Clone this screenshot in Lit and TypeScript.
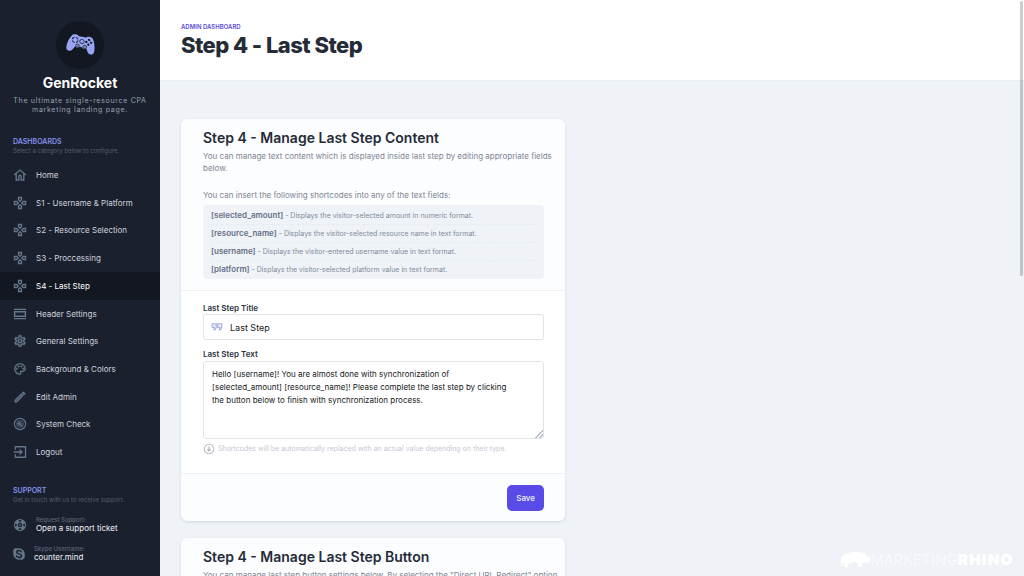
import { LitElement, html, css, svg, nothing } from "lit";
import { customElement, property } from "lit/decorators.js";

const icons: Record<string, unknown> = {
  home: svg`<path fill="none" stroke="currentColor" stroke-width="2.300" d="M2 12 12 3.600 22 12M5.500 10v10.500H10v-6a2 2 0 0 1 4 0v6h4.500V10"/>`,
  pad: svg`<g fill="none" stroke="currentColor" stroke-width="2.300">
    <path d="M9.500 2.500h5v4L12 9 9.500 6.500z"/><path d="M9.500 21.500h5v-4L12 15l-2.500 2.500z"/>
    <path d="M2.500 9.500v5h4L9 12 6.500 9.500z"/><path d="M21.500 9.500v5h-4L15 12l2.500-2.500z"/></g>`,
  header: svg`<path fill="currentColor" d="M1.500 3h21v2.200h-21zM1.500 18.800h21V21h-21zM1.500 7h21v10h-21zM4 9.300v5.400h16V9.300z" fill-rule="evenodd"/>`,
  gear: svg`<path fill="currentColor" stroke="currentColor" stroke-width=".6" d="M12 8a4 4 0 1 1 0 8 4 4 0 0 1 0-8m0 2a2 2 0 1 0 0 4 2 2 0 0 0 0-4m-2 12c-.25 0-.46-.18-.5-.42l-.37-2.65c-.63-.25-1.17-.59-1.690-.99l-2.490 1.010c-.22.08-.49 0-.61-.22l-2-3.460a.493.493 0 0 1 .12-.64l2.110-1.660L4.500 12l.07-1-2.110-1.630a.493.493 0 0 1-.12-.64l2-3.460c.12-.22.39-.31.61-.22l2.490 1c.52-.39 1.060-.73 1.690-.98l.37-2.650c.04-.24.25-.42.5-.42h4c.25 0 .46.18.5.42l.37 2.650c.63.25 1.170.59 1.690.98l2.490-1c.22-.09.49 0 .61.22l2 3.460c.13.22.07.49-.12.64L19.430 11l.07 1-.07 1 2.110 1.630c.19.15.25.42.12.64l-2 3.460c-.12.22-.39.31-.61.22l-2.490-1c-.52.39-1.060.73-1.690.98l-.37 2.650c-.04.24-.25.42-.5.42zm1.250-18-.37 2.610c-1.200.25-2.260.89-3.030 1.780L5.440 7.350l-.75 1.300L6.800 10.200a5.550 5.550 0 0 0 0 3.600l-2.120 1.560.75 1.300 2.430-1.040c.77.88 1.820 1.520 3.010 1.760l.37 2.620h1.520l.37-2.610c1.190-.25 2.240-.89 3.010-1.770l2.430 1.040.75-1.300-2.120-1.550c.4-1.170.4-2.440 0-3.610l2.110-1.550-.75-1.300-2.410 1.040a5.420 5.420 0 0 0-3.030-1.770L12.750 4z"/>`,
  palette: svg`<path fill="currentColor" stroke="currentColor" stroke-width=".4" d="M12 22A10 10 0 1 1 22 11c0 3.300-2.700 6-6 6h-1.800c-.3 0-.5.2-.5.5 0 .1.100.2.100.3.400.5.600 1.100.600 1.700A2.500 2.500 0 0 1 12 22m0-18a8 8 0 0 0 0 16c.3 0 .5-.2.5-.5 0-.2-.1-.3-.1-.4-.4-.5-.6-1-.6-1.600a2.500 2.500 0 0 1 2.500-2.500H16a4 4 0 0 0 4-4c0-3.900-3.600-7-8-7M6.500 10a1.500 1.500 0 1 1 0 3 1.500 1.500 0 0 1 0-3m3-4a1.500 1.500 0 1 1 0 3 1.500 1.500 0 0 1 0-3m5 0a1.500 1.500 0 1 1 0 3 1.500 1.500 0 0 1 0-3m3 4a1.500 1.500 0 1 1 0 3 1.500 1.500 0 0 1 0-3"/>`,
  pencil: svg`<path fill="currentColor" stroke="currentColor" stroke-width=".8" fill-rule="evenodd" d="M3 17.250V21h3.750L17.810 9.940l-3.750-3.750zM20.710 7.040a1 1 0 0 0 0-1.410l-2.340-2.340a1 1 0 0 0-1.410 0l-1.830 1.830 3.750 3.750zM5 18.100 14.060 9l.9.9L5.900 19H5z"/>`,
  check: svg`<circle cx="12" cy="12" r="9.700" fill="none" stroke="currentColor" stroke-width="2"/><circle cx="12" cy="12" r="7" fill="currentColor" opacity=".4"/><path d="M16.500 15.600 12.700 11.800a3 3 0 0 0-3.900-3.700l1.800 1.800-1.300 1.300-1.800-1.800a3 3 0 0 0 3.700 3.900l3.800 3.800z" fill="currentColor"/>`,
  logout: svg`<path fill="none" stroke="currentColor" stroke-width="2.200" d="M4 8V3h17.500v18H4v-5M1.500 12H15M11 7.500l4.500 4.500-4.500 4.500"/>`,
  support: svg`<path fill="currentColor" fill-rule="evenodd" d="M12 1.500a10.500 10.500 0 1 1 0 21 10.500 10.500 0 0 1 0-21m0 6.700a3.800 3.800 0 1 0 0 7.600 3.800 3.800 0 0 0 0-7.600M9.400 3.700l1 2.700h3.200l1-2.700a9 9 0 0 0-5.200 0M3.700 9.400a9 9 0 0 0 0 5.200l2.700-1v-3.200zm16.600 0-2.700 1v3.200l2.700 1a9 9 0 0 0 0-5.200M9.400 20.300a9 9 0 0 0 5.200 0l-1-2.700h-3.200z"/><circle cx="12" cy="12" r="1.500" fill="currentColor"/>`,
  skype: svg`<path fill="currentColor" d="M7 1.500c1.200 0 2.300.3 3.200.9A9.800 9.800 0 0 1 21.600 13.900 6 6 0 0 1 13.800 21.600 9.800 9.800 0 0 1 2.400 10.100 6 6 0 0 1 7 1.500"/><path d="M16 8.300C15.300 6.700 13.800 6 12 6c-2.200 0-4 1-4 2.900 0 4 8.300 2 8.300 5.900 0 2-1.900 3.200-4.200 3.200-2.200 0-3.800-.9-4.500-2.900" fill="none" stroke="#1b202e" stroke-width="2.400" stroke-linecap="round"/>`,
  quote: svg`<path fill="currentColor" fill-opacity=".25" stroke="currentColor" stroke-width="2.300" d="M2.500 5.500h8V13l-2 4.500h-3l1-4.500h-4zM13.500 5.500h8V13l-2 4.500h-3l1-4.500h-4z"/>`,
  info: svg`<circle cx="12" cy="12" r="9.500" fill="none" stroke="currentColor" stroke-width="2.200"/><path fill="none" stroke="currentColor" stroke-width="2.600" d="M12 6.500v9M8.500 12.500l3.500 3.500 3.500-3.500"/>`,
};

const icon = (name: string) =>
  html`<svg class="icon" viewBox="0 0 24 24" aria-hidden="true">${icons[name]}</svg>`;

const iconStyles = css`
  .icon { width: 14px; height: 14px; display: block; flex: none; }
`;

@customElement("side-bar")
class SideBar extends LitElement {
  static styles = [iconStyles, css`
    :host { display: block; background: #1b202e; color: #fff; overflow: hidden; }
    .brand { padding: 21px 8px 0; text-align: center; }
    .logo { width: 48px; height: 48px; display: block; margin: 0 auto; }
    .name { margin: 5px 0 0; font-size: 14px; line-height: 18px; font-weight: 700; }
    .tagline { margin: 4px 0 0; font-size: 7px; line-height: 9px; letter-spacing: 0.1em; color: #9aa2b1; }
    .group { padding: 0 13px; }
    .group-main { margin-top: 23px; }
    .group-support { margin-top: 20px; }
    .group-title { margin: 0; font-size: 7px; line-height: 10px; font-weight: 600; color: #8492ea; }
    .group-note { margin: 0; font-size: 6px; line-height: 8px; color: #555e6f; }
    .menu { display: flex; flex-direction: column; height: 305px; margin: 6px 0 0; padding: 0; list-style: none; }
    .entry { flex: 1; display: flex; }
    .link { flex: 1; display: flex; align-items: center; gap: 9px; padding: 0 13px; font-size: 8px; color: #cdd3dd; text-decoration: none; }
    .link.active { background: #131722; color: #fff; }
    .link .icon, .contact .icon { color: #64768a; }
    .contact { display: flex; align-items: center; gap: 9px; margin-top: 12px; padding: 0 13px; color: #f1f3f7; text-decoration: none; }
    .contact + .contact { gap: 8px; padding: 0 12px; }
    .contact-label { display: block; font-size: 6px; line-height: 7px; font-weight: 500; color: #5b6679; }
    .contact-value { display: block; font-size: 8px; line-height: 10px; }
  `];

  items = [
    ["home", "Home"], ["pad", "S1 - Username & Platform"], ["pad", "S2 - Resource Selection"],
    ["pad", "S3 - Proccessing"], ["pad", "S4 - Last Step"], ["header", "Header Settings"],
    ["gear", "General Settings"], ["palette", "Background & Colors"], ["pencil", "Edit Admin"],
    ["check", "System Check"], ["logout", "Logout"],
  ];

  render() {
    return html`
      <div class="brand">
        <svg class="logo" viewBox="0 0 48 48" role="img" aria-label="Game controller">
          <circle cx="24" cy="24" r="24" fill="#131722" />
          <g transform="translate(1 1) rotate(10 23.500 25) scale(1 .88)">
            <path fill="#98a5f3" d="M13.500 16.300c1.400-1.300 4.300-1.500 5.600-.5l.8.900h7.600l.8-.9c1.400-1 4.200-.8 5.500.5 2.600 3.700 4.100 9.500 4 14.700-.1 2.400-1.300 4-3.300 3.900-1.900 0-2.800-1.400-3.600-3l-1.500-3.300c-1.200 1.500-3.400 1.500-4.500-.3h-2.300c-1.100 1.800-3.300 1.800-4.500.3l-1.500 3.300c-.8 1.600-1.800 3-3.700 3-2 0-3.300-1.500-3.400-3.900-.1-5.200 1.400-11 4-14.700"/>
            <circle cx="17" cy="21.500" r="3" fill="none" stroke="#131722" stroke-width="1" stroke-dasharray="3.300 1.400"/>
            <circle cx="24" cy="22" r="2.300" fill="none" stroke="#131722" stroke-width=".8"/>
            <g fill="#131722"><circle cx="30.800" cy="18.800" r="1.200"/><circle cx="28.400" cy="21.500" r="1.200"/><circle cx="33.200" cy="21.500" r="1.200"/><circle cx="30.800" cy="24.200" r="1.200"/></g>
            <g fill="#7f89ad" stroke="#131722" stroke-width=".6"><circle cx="20.300" cy="27.500" r="1.900"/><circle cx="27.600" cy="27.500" r="1.900"/></g>
          </g>
        </svg>
        <p class="name">GenRocket</p>
        <p class="tagline">The ultimate single-resource CPA marketing landing page.</p>
      </div>
      <div class="group group-main">
        <h2 class="group-title">DASHBOARDS</h2>
        <p class="group-note">Select a category below to configure.</p>
      </div>
      <ul class="menu">
        ${this.items.map(([name, label], i) => html`<li class="entry">
          <a class="link ${i === 4 ? "active" : ""}" href="#" aria-current=${i === 4 ? "page" : nothing}>${icon(name)}<span>${label}</span></a>
        </li>`)}
      </ul>
      <div class="group group-support">
        <h2 class="group-title">SUPPORT</h2>
        <p class="group-note">Get in touch with us to receive support.</p>
      </div>
      <a class="contact" href="#">${icon("support")}<span><span class="contact-label">Request Support:</span><span class="contact-value">Open a support ticket</span></span></a>
      <a class="contact" href="#">${icon("skype")}<span><span class="contact-label">Skype Username:</span><span class="contact-value">counter.mind</span></span></a>
    `;
  }
}

@customElement("settings-card")
class SettingsCard extends LitElement {
  @property() heading = "";
  static styles = css`
    :host { display: block; background: #fff; border-radius: 7px; box-shadow: 0 1px 3px rgba(40, 60, 90, 0.14); overflow: hidden; }
    .head { padding: 10px 21px 11px 22px; background: #fbfdff; border-bottom: 1px solid #edf1f6; }
    .title { margin: 0; font-size: 14px; line-height: 18px; font-weight: 600; color: #252c38; }
    .body { padding: 12px 21px 18px 22px; }
    .foot { display: flex; justify-content: flex-end; padding: 11px 21px 10px; background: #fbfdff; border-top: 1px solid #edf1f6; }
  `;
  render() {
    return html`
      <div class="head"><h2 class="title">${this.heading}</h2><slot name="intro"></slot></div>
      <div class="body"><slot></slot></div>
      <div class="foot"><slot name="actions"></slot></div>
    `;
  }
}

@customElement("app-root")
class AppRoot extends LitElement {
  static styles = [iconStyles, css`
    :host { display: grid; grid-template-columns: 160px minmax(0, 1fr); height: 100vh; overflow: hidden; position: relative; background: #eff3f8; font-family: Inter, sans-serif; }
    .main { min-width: 0; overflow: hidden; }
    .top { padding: 22px 21px 20px; background: #fff; border-bottom: 1px solid #e9eef4; }
    .eyebrow { margin: 0; font-size: 6px; line-height: 9px; font-weight: 600; color: #5a4be0; }
    .page-title { margin: 0; font-size: 22px; line-height: 29px; font-weight: 800; letter-spacing: -0.025em; color: #252c38; }
    .cards { display: flex; flex-direction: column; gap: 17px; max-width: 384px; padding: 38px 21px; }
    .note { margin: 3px -18px 0 0; font-size: 8px; line-height: 12px; color: #7d8593; }
    .note-codes { margin-top: 15px; }
    .codes { margin: 4px 0 0; padding: 2px 8px 1px; list-style: none; border-radius: 4px; background: #eff3f8; font-size: 7px; color: #7f8999; }
    .code { padding: 4px 0 3px; line-height: 10px; }
    .code + .code { border-top: 1px dashed #e6ebf2; }
    .key { font-size: 8px; line-height: 8px; font-weight: 600; color: #667085; }
    .label { display: block; font-size: 8px; line-height: 10px; font-weight: 600; color: #2d3441; }
    .field { display: flex; align-items: center; gap: 7px; box-sizing: border-box; height: 26px; margin: 1px 0 9px; padding: 0 7px; border: 1px solid #dfe3e9; border-radius: 3px; }
    .field .icon { width: 12px; height: 12px; color: #a3b3dd; }
    .text { flex: 1; min-width: 0; border: 0; padding: 0; outline: 0; background: none; font: 400 9px/13px Inter, sans-serif; color: #161a20; }
    .area { display: block; box-sizing: border-box; width: 100%; height: 78px; margin: 2px 0 4px; padding: 6px 28px 6px 8px; border: 1px solid #dfe3e9; border-radius: 3px; outline: 0; font: 400 8px/13px Inter, sans-serif; color: #161a20; overflow: hidden; resize: vertical; }
    .area::-webkit-resizer { background: linear-gradient(135deg, transparent 72%, #b9bec6 72%, #b9bec6 77%, transparent 77%, transparent 86%, #b9bec6 86%, #b9bec6 91%, transparent 91%); }
    .hint { display: flex; align-items: center; gap: 3px; margin: 0; font-size: 7px; line-height: 12px; color: #c3c9d2; }
    .hint .icon { width: 12px; height: 12px; color: #b9bfc9; }
    .save { height: 26px; padding: 0 9px; border: 0; border-radius: 5px; background: #584be8; color: #f3f2ff; font: 500 8px/12px Inter, sans-serif; }
    .thumb { position: absolute; top: 1px; right: 1px; width: 3px; height: 275px; border-radius: 2px; background: rgba(90, 95, 100, 0.32); }
    .mark { position: absolute; right: 10px; bottom: 8px; display: flex; align-items: center; color: rgba(255, 255, 255, 0.7); font-size: 14px; line-height: 16px; font-weight: 300; letter-spacing: 0.04em; }
    .mark-strong { font-size: 15px; font-weight: 900; letter-spacing: 0.1em; color: #fff; }
    .rhino { width: 31px; height: 17px; display: block; }
  `];

  codes = [
    ["[selected_amount]", "Displays the visitor-selected amount in numeric format."],
    ["[resource_name]", "Displays the visitor-selected resource name in text format."],
    ["[username]", "Displays the visitor-entered username value in text format."],
    ["[platform]", "Displays the visitor-selected platform value in text format."],
  ];

  render() {
    return html`
      <side-bar></side-bar>
      <main class="main">
        <header class="top">
          <p class="eyebrow">ADMIN DASHBOARD</p>
          <h1 class="page-title">Step 4 - Last Step</h1>
        </header>
        <div class="cards">
          <settings-card heading="Step 4 - Manage Last Step Content">
            <div slot="intro">
              <p class="note">You can manage text content which is displayed inside last step by editing appropriate fields below.</p>
              <p class="note note-codes">You can insert the following shortcodes into any of the text fields:</p>
              <ul class="codes">
                ${this.codes.map(([key, text]) => html`<li class="code"><b class="key">${key}</b> - ${text}</li>`)}
              </ul>
            </div>
            <label class="label" for="step-title">Last Step Title</label>
            <div class="field">${icon("quote")}<input class="text" id="step-title" type="text" .value=${"Last Step"} /></div>
            <label class="label" for="step-text">Last Step Text</label>
            <textarea class="area" id="step-text" .value=${"Hello [username]! You are almost done with synchronization of [selected_amount] [resource_name]! Please complete the last step by clicking the button below to finish with synchronization process."}></textarea>
            <p class="hint">${icon("info")}Shortcodes will be automatically replaced with an actual value depending on their type.</p>
            <button class="save" slot="actions" type="button">Save</button>
          </settings-card>
          <settings-card heading="Step 4 - Manage Last Step Button">
            <p class="note" slot="intro">You can manage last step button settings below. By selecting the "Direct URL Redirect" option</p>
          </settings-card>
        </div>
      </main>
      <div class="thumb"></div>
      <div class="mark">
        <svg class="rhino" viewBox="0 0 31 17" aria-hidden="true"><path fill="#fff" d="M1 15C0 9 1 4 6 3c4-1 6-3 11-2 3 .5 5 1 6 2l1-2 1.500 2.500C28 5 29 8 30.500 6c.3 4-1.500 6-4 6l-3-.5-1.500 2V16h-4v-4l-4-1-4 1-2 1v3H4v-3l-1.500-2L2.500 15z"/></svg>
        <span>MARKETING<span class="mark-strong">RHINO</span></span>
      </div>
    `;
  }
}
